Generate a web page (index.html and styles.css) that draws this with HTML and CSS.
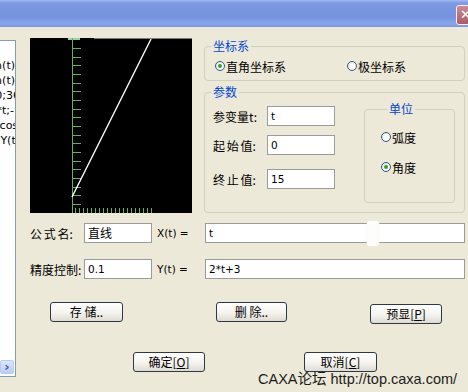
FILE: index.html
```html
<!DOCTYPE html>
<html lang="zh-CN">
<head>
  <meta charset="UTF-8">
  <title>公式曲线</title>
  <link rel="stylesheet" href="styles.css">
</head>
<body>
  <div class="titlebar"><span class="close">✕</span></div>

  <div class="window">
    <div class="list">
      <div class="lines">
        <div>X(t)=sin(t)</div>
        <div>Y(t)=sin(t)</div>
        <div class="cut12">t=0;360</div>
        <div class="cut13">t=5*t;-10</div>
        <div class="cut16">X(t)=cos(t)</div>
        <div class="cut5">Y(t)</div>
      </div>
      <div class="hscroll">›</div>
    </div>

    <div class="content">
      <div class="top">
        <div class="plot">
          <svg width="162" height="175" viewBox="0 0 162 175">
            <rect width="162" height="175" fill="#000"/>
            <line x1="64" y1="0.5" x2="162" y2="0.5" stroke="#7a7a7a"/>
            <rect x="38" y="0" width="12" height="2" fill="#9fd49f"/>
            <line x1="42.5" y1="0" x2="42.5" y2="175" stroke="#62b062"/>
            <path stroke="#62b062" d="M42 10.5h9M42 19.5h9M42 27.5h9M42 36.5h9M42 45.5h9M42 53.5h9M42 62.5h9M42 71.5h9M42 79.5h9M42 88.5h9M42 97.5h9M42 105.5h9M42 114.5h9M42 123.5h9M42 131.5h9M42 140.5h9M42 149.5h9M42 157.5h9M42 166.5h9"/>
            <path stroke="#62b062" d="M45.5 170v5M49.5 170v5M53.5 170v5M57.5 170v5M61.5 170v5M65.5 170v5M69.5 170v5M73.5 170v5M77.5 170v5M81.5 170v5M85.5 170v5M89.5 170v5M93.5 170v5M97.5 170v5M101.5 170v5M105.5 170v5M109.5 170v5M113.5 170v5M117.5 170v5M121.5 170v5"/>
            <line x1="42" y1="159" x2="121" y2="1" stroke="#fff" stroke-width="1.4"/>
          </svg>
        </div>

        <div class="panel">
          <fieldset class="group coords">
            <legend>坐标系</legend>
            <div class="radios">
              <span class="radio wide on"><i></i>直角坐标系</span>
              <span class="radio"><i></i>极坐标系</span>
            </div>
          </fieldset>

          <fieldset class="group params">
            <legend>参数</legend>
            <div class="pbody">
              <div class="fields">
                <div class="field"><span class="lbl">参变量t:</span><span class="box">t</span></div>
                <div class="field second"><span class="lbl spaced">起 始 值:</span><span class="box">0</span></div>
                <div class="field third"><span class="lbl spaced">终 止 值:</span><span class="box">15</span></div>
              </div>
              <fieldset class="group unit">
                <legend>单位</legend>
                <span class="radio first"><i></i>弧度</span>
                <span class="radio next on"><i></i>角度</span>
              </fieldset>
            </div>
          </fieldset>
        </div>
      </div>

      <div class="row row1">
        <span class="lbl spaced">公 式 名:</span><span class="box short">直线</span>
        <span class="fx">X(t) =</span><span class="box long">t</span>
      </div>
      <div class="row row2">
        <span class="lbl">精度控制:</span><span class="box short">0.1</span>
        <span class="fx">Y(t) =</span><span class="box long">2*t+3</span>
      </div>

      <div class="actions">
        <span class="btn save">存 储..</span>
        <span class="btn del">删 除..</span>
        <span class="btn preview">预显[<u>P</u>]</span>
      </div>
      <div class="confirm">
        <span class="btn ok">确定[<u>O</u>]</span>
        <span class="btn cancel">取消[<u>C</u>]</span>
      </div>
    </div>
  </div>

  <div class="blot"></div>
  <div class="watermark">CAXA论坛 http://top.caxa.com/</div>
</body>
</html>
```

FILE: styles.css
```css
* {
  box-sizing: border-box;
}
body {
  margin: 0;
  width: 468px;
  height: 392px;
  overflow: hidden;
  position: relative;
  background-color: #ece9d8;
  font-family: "Noto Sans CJK SC", sans-serif;
  font-size: 12px;
  color: #000;
}
.titlebar {
  height: 27px;
  background: linear-gradient(#a0baf2 0, #7d9ae3 3px, #7592dc 17px, #88a6ec 23px, #7b98e2 27px);
  display: flex;
  justify-content: flex-end;
  align-items: flex-start;
  overflow: hidden;
}
.close {
  margin-top: 5px;
  margin-right: -9px;
  width: 21px;
  height: 20px;
  border: 1px solid #f4eef0;
  border-radius: 3px;
  background: linear-gradient(#c88d93, #a95c66);
  color: #fff;
  font-family: "DejaVu Sans", sans-serif;
  font-size: 13px;
  font-weight: bold;
  line-height: 18px;
  padding-left: 3px;
}
.window {
  display: flex;
  align-items: flex-start;
}

/* left list, mostly cut off */
.list {
  width: 16px;
  height: 337px;
  margin-top: 13px;
  background-color: #fff;
  border: 1px solid #7f9db9;
  border-left: 0;
  overflow: hidden;
  display: flex;
  flex-direction: column;
}
.lines {
  width: 15px;
  padding-top: 17px;
  display: flex;
  flex-direction: column;
  align-items: flex-end;
  font-family: "DejaVu Sans", sans-serif;
  font-size: 11px;
  line-height: 15px;
  white-space: nowrap;
}
.lines .cut5 { margin-right: -5px; }
.lines .cut12 { margin-right: -12px; }
.lines .cut13 { margin-right: -13px; }
.lines .cut16 { margin-right: -16px; }
.hscroll {
  margin-top: auto;
  margin-bottom: 2px;
  width: 14px;
  height: 14px;
  border: 1px solid #b7cbf3;
  border-radius: 2px;
  background: linear-gradient(#dbe6fd, #b9cdf8);
  color: #4d6185;
  font-family: "DejaVu Sans", sans-serif;
  font-weight: bold;
  font-size: 13px;
  line-height: 11px;
  text-align: center;
}

.content {
  margin-left: 14px;
  padding-top: 11px;
  width: 435px;
}
.top {
  display: flex;
  align-items: flex-start;
}
.plot {
  width: 162px;
  height: 175px;
}
.plot svg {
  display: block;
}
.panel {
  margin-left: 12px;
  width: 261px;
}

/* group boxes */
.group {
  margin: 0;
  padding: 0;
  min-width: 0;
  border: 1px solid #d0d0bf;
  border-radius: 4px;
}
.group legend {
  margin-left: 6px;
  padding: 0 2px;
  color: #0046d5;
  line-height: 16px;
}
.radios {
  display: flex;
  height: 14px;
  margin: 5px 0 7px 10px;
}
.radio {
  display: flex;
  align-items: center;
  height: 14px;
}
.radio i {
  width: 10px;
  height: 10px;
  margin-right: 1px;
  border: 1px solid #2c5a8a;
  border-radius: 50%;
  background: radial-gradient(circle at 60% 60%, #fff 30%, #dcd9d0);
  display: flex;
  align-items: center;
  justify-content: center;
}
.radio.on i::after {
  content: "";
  width: 4px;
  height: 4px;
  border-radius: 50%;
  background-color: #2fa22f;
}
.radio.wide {
  width: 132px;
}
.params {
  margin-top: 3px;
}
.pbody {
  display: flex;
  align-items: flex-start;
  padding: 6px 0 9px 8px;
}
.field {
  display: flex;
  align-items: center;
  height: 20px;
}
.field.second { margin-top: 9px; }
.field.third { margin-top: 14px; }
.lbl {
  width: 54px;
  white-space: nowrap;
}
.lbl.spaced {
  word-spacing: -1px;
}
.box {
  width: 68px;
  height: 20px;
  border: 1px solid #9b9b9b;
  background-color: #fff;
  padding-left: 3px;
  font-family: "DejaVu Sans", "Noto Sans CJK SC", sans-serif;
  font-size: 10.5px;
  line-height: 18px;
  white-space: nowrap;
}
.unit {
  margin-left: 29px;
  margin-top: -5px;
  width: 91px;
  height: 102px;
  padding-left: 16px;
}
.unit .first { margin-top: 13px; }
.unit .next { margin-top: 16px; }

/* formula rows */
.row {
  display: flex;
  align-items: center;
  height: 20px;
}
.row1 { margin-top: 10px; }
.row2 { margin-top: 16px; }
.box.short {
  width: 68px;
}
.row1 .box.short {
  font-family: "Noto Sans CJK SC", sans-serif;
  font-size: 12px;
}
.fx {
  margin-left: 5px;
  width: 48px;
  font-family: "DejaVu Sans", sans-serif;
  font-size: 10.5px;
}
.box.long {
  width: 260px;
}

/* buttons */
.actions {
  display: flex;
  align-items: flex-start;
  margin-top: 23px;
  height: 22px;
}
.confirm {
  display: flex;
  margin-top: 28px;
}
.btn {
  height: 20px;
  border: 1px solid #2d3946;
  border-radius: 3px;
  background: linear-gradient(#ffffff, #f4f3ee 55%, #dedbd0);
  display: flex;
  align-items: center;
  justify-content: center;
  font-size: 12px;
  line-height: 1;
  white-space: nowrap;
}
.btn u {
  text-underline-offset: 1px;
}
.save { margin-left: 20px; width: 73px; }
.del { margin-left: 93px; width: 71px; }
.preview { margin-left: 83px; width: 72px; margin-top: 2px; }
.ok { margin-left: 103px; width: 72px; }
.cancel { margin-left: 99px; width: 73px; }

/* white smudge left by the forum's image stamp */
.blot {
  position: absolute;
  left: 367px;
  top: 221px;
  width: 12px;
  height: 25px;
  border-radius: 3px;
  background-color: #fdfdfb;
  box-shadow: 0 0 2px #f6f4ee;
}

/* forum watermark lying over the dialog */
.watermark {
  position: absolute;
  left: 258px;
  top: 367px;
  font-family: "Liberation Sans", "Noto Sans CJK SC", sans-serif;
  font-size: 14.5px;
  color: #1c1c1c;
  white-space: nowrap;
}
```
